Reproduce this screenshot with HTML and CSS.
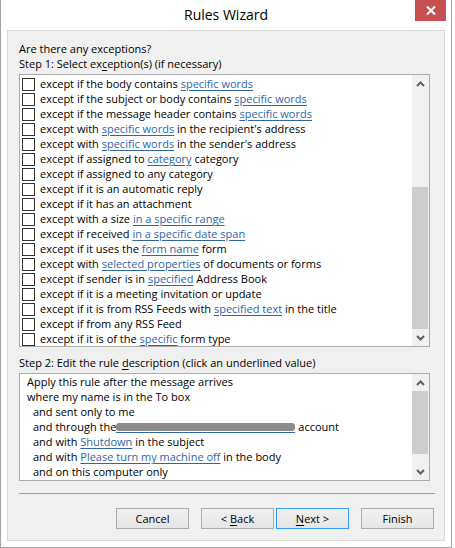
FILE: index.html
```html
<!DOCTYPE html>
<html>
<head>
<meta charset="utf-8">
<link rel="stylesheet" href="styles.css">
</head>
<body>
<div class="window">
  <div class="titlebar">
    <div class="title">Rules Wizard</div>
    <div class="close">
      <svg width="10" height="9" viewBox="0 0 10 9"><path d="M1 0.5 L9 8.5 M9 0.5 L1 8.5" stroke="#fff" stroke-width="2" fill="none"/></svg>
    </div>
  </div>
  <div class="panel">
    <div class="line">Are there any exceptions?</div>
    <div class="line">Step 1: Select ex<u>c</u>eption(s) (if necessary)</div>
    <div class="listbox list1">
      <div class="items">
        <div class="item"><span class="cb"></span><span>except if the body contains <a>specific words</a></span></div>
        <div class="item"><span class="cb"></span><span>except if the subject or body contains <a>specific words</a></span></div>
        <div class="item"><span class="cb"></span><span>except if the message header contains <a>specific words</a></span></div>
        <div class="item"><span class="cb"></span><span>except with <a>specific words</a> in the recipient's address</span></div>
        <div class="item"><span class="cb"></span><span>except with <a>specific words</a> in the sender's address</span></div>
        <div class="item"><span class="cb"></span><span>except if assigned to <a>category</a> category</span></div>
        <div class="item"><span class="cb"></span><span>except if assigned to any category</span></div>
        <div class="item"><span class="cb"></span><span>except if it is an automatic reply</span></div>
        <div class="item"><span class="cb"></span><span>except if it has an attachment</span></div>
        <div class="item"><span class="cb"></span><span>except with a size <a>in a specific range</a></span></div>
        <div class="item"><span class="cb"></span><span>except if received <a>in a specific date span</a></span></div>
        <div class="item"><span class="cb"></span><span>except if it uses the <a>form name</a> form</span></div>
        <div class="item"><span class="cb"></span><span>except with <a>selected properties</a> of documents or forms</span></div>
        <div class="item"><span class="cb"></span><span>except if sender is in <a>specified</a> Address Book</span></div>
        <div class="item"><span class="cb"></span><span>except if it is a meeting invitation or update</span></div>
        <div class="item"><span class="cb"></span><span>except if it is from RSS Feeds with <a>specified text</a> in the title</span></div>
        <div class="item"><span class="cb"></span><span>except if from any RSS Feed</span></div>
        <div class="item"><span class="cb"></span><span>except if it is of the <a>specific</a> form type</span></div>
      </div>
      <div class="scrollbar">
        <div class="arrow"><svg width="9" height="6" viewBox="0 0 9 6"><path d="M1 5 L4.5 1.5 L8 5" stroke="#606060" stroke-width="2" fill="none"/></svg></div>
        <div class="track"><div class="thumb thumb1"></div></div>
        <div class="arrow"><svg width="9" height="6" viewBox="0 0 9 6"><path d="M1 1 L4.5 4.5 L8 1" stroke="#606060" stroke-width="2" fill="none"/></svg></div>
      </div>
    </div>
    <div class="line step2">Step 2: Edit the rule <u>d</u>escription (click an underlined value)</div>
    <div class="listbox list2">
      <div class="desc">
        <div class="dline">Apply this rule after the message arrives</div>
        <div class="dline">where my name is in the To box</div>
        <div class="dline ind">and sent only to me</div>
        <div class="dline ind">and through the<a class="redact"><span class="blob"></span></a> account</div>
        <div class="dline ind">and with <a>Shutdown</a> in the subject</div>
        <div class="dline ind">and with <a>Please turn my machine off</a> in the body</div>
        <div class="dline ind">and on this computer only</div>
      </div>
      <div class="scrollbar">
        <div class="arrow"><svg width="9" height="6" viewBox="0 0 9 6"><path d="M1 5 L4.5 1.5 L8 5" stroke="#606060" stroke-width="2" fill="none"/></svg></div>
        <div class="track"><div class="thumb thumb2"></div></div>
        <div class="arrow"><svg width="9" height="6" viewBox="0 0 9 6"><path d="M1 1 L4.5 4.5 L8 1" stroke="#606060" stroke-width="2" fill="none"/></svg></div>
      </div>
    </div>
    <div class="sep"></div>
    <div class="buttons">
      <div class="btn">Cancel</div>
      <div class="btn back">&lt; <u>B</u>ack</div>
      <div class="btn next"><u>N</u>ext &gt;</div>
      <div class="btn finish">Finish</div>
    </div>
  </div>
</div>
</body>
</html>
```
FILE: styles.css
```css
* { box-sizing: border-box; }
body {
  margin: 0;
  background: #fff;
  font-family: "Open Sans", "Noto Sans", sans-serif;
  font-size: 11px;
  color: #000;
}
.window {
  width: 452px;
  height: 548px;
  border: 1px solid #a3a3a3;
  border-top: none;
  background: #fff;
  display: flex;
  flex-direction: column;
  padding: 0 6px 6px;
}
.titlebar {
  margin: 0 -6px;
  height: 30px;
  display: grid;
  grid-template-columns: 1fr auto 1fr;
}
.title {
  grid-column: 2;
  font-size: 14px;
  line-height: 30px;
  color: #000;
}
.close {
  grid-column: 3;
  justify-self: end;
  align-self: start;
  margin-right: 5px;
  width: 31px;
  height: 21px;
  background: #c75050;
  display: flex;
  align-items: center;
  justify-content: center;
}
.panel {
  flex: 1;
  border: 1px solid #d9d9d9;
  background: #f0f0f0;
  padding: 10px 0 0 11px;
  display: flex;
  flex-direction: column;
}
.line {
  line-height: 15px;
  height: 15px;
  white-space: nowrap;
}
.step2 { margin-top: 8px; }
u { text-decoration: underline; text-underline-offset: 2px; }
a {
  color: #2f66a6;
  text-decoration: underline;
  text-underline-offset: 2px;
}
.listbox {
  width: 411px;
  border: 1px solid #acacac;
  background: #fff;
  display: flex;
  overflow: hidden;
}
.list1 { height: 273px; margin-top: 3px; }
.list2 { height: 108px; margin-top: 3px; }
.items {
  flex: 1;
  padding-top: 1px;
  overflow: hidden;
}
.item {
  height: 15px;
  line-height: 15px;
  display: flex;
  align-items: flex-start;
  white-space: nowrap;
}
.cb {
  flex: none;
  width: 13px;
  height: 13px;
  margin: 2px 5px 0 2px;
  border: 1px solid #333;
  background: #fff;
}
.desc {
  flex: 1;
  padding: 0 0 0 7px;
  overflow: hidden;
}
.dline {
  height: 15px;
  line-height: 15px;
  white-space: nowrap;
}
.ind { padding-left: 6px; }
.redact {
  display: inline-block;
  line-height: 10px;
  border-bottom: 1px solid #2f66a6;
  padding-bottom: 1px;
  vertical-align: -2px;
}
.blob {
  display: block;
  width: 179px;
  height: 8px;
  background: #8c8c8c;
  border-radius: 3px;
  filter: blur(0.7px);
}
.scrollbar {
  flex: none;
  width: 17px;
  background: #f0f0f0;
  display: flex;
  flex-direction: column;
}
.arrow {
  flex: none;
  height: 17px;
  display: flex;
  align-items: center;
  justify-content: center;
}
.track { flex: 1; display: flex; flex-direction: column; }
.thumb { background: #cdcdcd; margin: 0 1px 0 0; }
.thumb1 { margin-top: 95px; height: 142px; }
.thumb2 { height: 63px; }
.sep {
  width: 416px;
  height: 1px;
  background: #a0a0a0;
  margin-top: 12px;
}
.buttons {
  margin-top: 14px;
  padding-left: 97px;
  display: flex;
}
.btn {
  width: 73px;
  height: 21px;
  border: 1px solid #acacac;
  background: linear-gradient(#f0f0f0, #e5e5e5);
  text-align: center;
  line-height: 19px;
  margin-right: 12px;
}
.back { margin-right: 2px; }
.next { border-color: #3399ff; }
.finish { margin-right: 0; }
```
